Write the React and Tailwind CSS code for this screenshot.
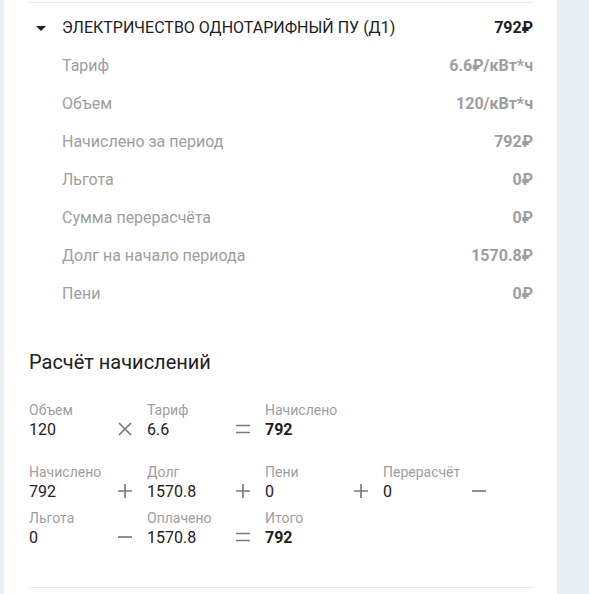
import React from "react";

const rows = [
  ["Тариф", "6.6₽/кВт*ч"],
  ["Объем", "120/кВт*ч"],
  ["Начислено за период", "792₽"],
  ["Льгота", "0₽"],
  ["Сумма перерасчёта", "0₽"],
  ["Долг на начало периода", "1570.8₽"],
  ["Пени", "0₽"],
];

function Op({ type }) {
  return (
    <div className="w-[24px] h-[20px] flex items-center justify-center">
      {type === "x" && (
        <svg width="16" height="16" viewBox="0 0 16 16">
          <path d="M2 2 L14 14 M14 2 L2 14" stroke="#7a7a7a" strokeWidth="1.7" />
        </svg>
      )}
      {type === "+" && (
        <svg width="16" height="16" viewBox="0 0 16 16">
          <path d="M8 1 V15 M1 8 H15" stroke="#7a7a7a" strokeWidth="1.7" />
        </svg>
      )}
      {type === "-" && (
        <svg width="16" height="16" viewBox="0 0 16 16">
          <path d="M1 8 H15" stroke="#7a7a7a" strokeWidth="1.7" />
        </svg>
      )}
      {type === "=" && (
        <svg width="16" height="16" viewBox="0 0 16 16">
          <path d="M1 4.5 H15 M1 11.5 H15" stroke="#7a7a7a" strokeWidth="1.7" />
        </svg>
      )}
    </div>
  );
}

function Cell({ label, value, op, bold }) {
  return (
    <div className="w-[118px] h-[38px] flex items-end">
      <div className="w-[84px] flex flex-col">
        <span className="text-[14px] leading-[17px] text-[#9e9e9e] whitespace-nowrap">{label}</span>
        <span className={`text-[16px] leading-[21px] text-[#212121] ${bold ? "font-bold" : ""}`}>{value}</span>
      </div>
      {op ? <div className="mb-[1px]"><Op type={op} /></div> : null}
    </div>
  );
}

export default function App() {
  return (
    <div
      className="w-[589px] h-[594px] bg-[#e9eef2] flex overflow-hidden"
      style={{ fontFamily: "Roboto, 'Liberation Sans', sans-serif" }}
    >
      <div className="ml-[4px] w-[553px] bg-white pl-[25px] pr-[24px] flex flex-col">
        <div className="mt-[2px] h-px bg-[#eaeaea]" />
        <div className="mt-[6px] h-[38px] flex items-center">
          <div className="w-[33px] flex justify-start pl-[7px]">
            <svg width="10" height="5" viewBox="0 0 10 5">
              <path d="M0 0 L10 0 L5 5 Z" fill="#212121" />
            </svg>
          </div>
          <span className="text-[16px] text-[#212121] uppercase">ЭЛЕКТРИЧЕСТВО ОДНОТАРИФНЫЙ ПУ (Д1)</span>
          <span className="ml-auto text-[16px] font-bold text-[#212121]">792₽</span>
        </div>
        {rows.map(([l, v]) => (
          <div key={l} className="h-[38px] flex items-center pl-[33px]">
            <span className="text-[16px] text-[#9e9e9e]">{l}</span>
            <span className="ml-auto text-[16px] font-bold text-[#9e9e9e]">{v}</span>
          </div>
        ))}
        <div className="mt-[37px] text-[20px] leading-[24px] text-[#212121]">Расчёт начислений</div>
        <div className="mt-[28px] flex">
          <Cell label="Объем" value="120" op="x" />
          <Cell label="Тариф" value="6.6" op="=" />
          <Cell label="Начислено" value="792" bold />
        </div>
        <div className="mt-[24px] flex flex-wrap gap-y-[8px]">
          <Cell label="Начислено" value="792" op="+" />
          <Cell label="Долг" value="1570.8" op="+" />
          <Cell label="Пени" value="0" op="+" />
          <Cell label="Перерасчёт" value="0" op="-" />
          <Cell label="Льгота" value="0" op="-" />
          <Cell label="Оплачено" value="1570.8" op="=" />
          <Cell label="Итого" value="792" bold />
        </div>
        <div className="mt-[39px] h-px bg-[#eaeaea]" />
      </div>
    </div>
  );
}
